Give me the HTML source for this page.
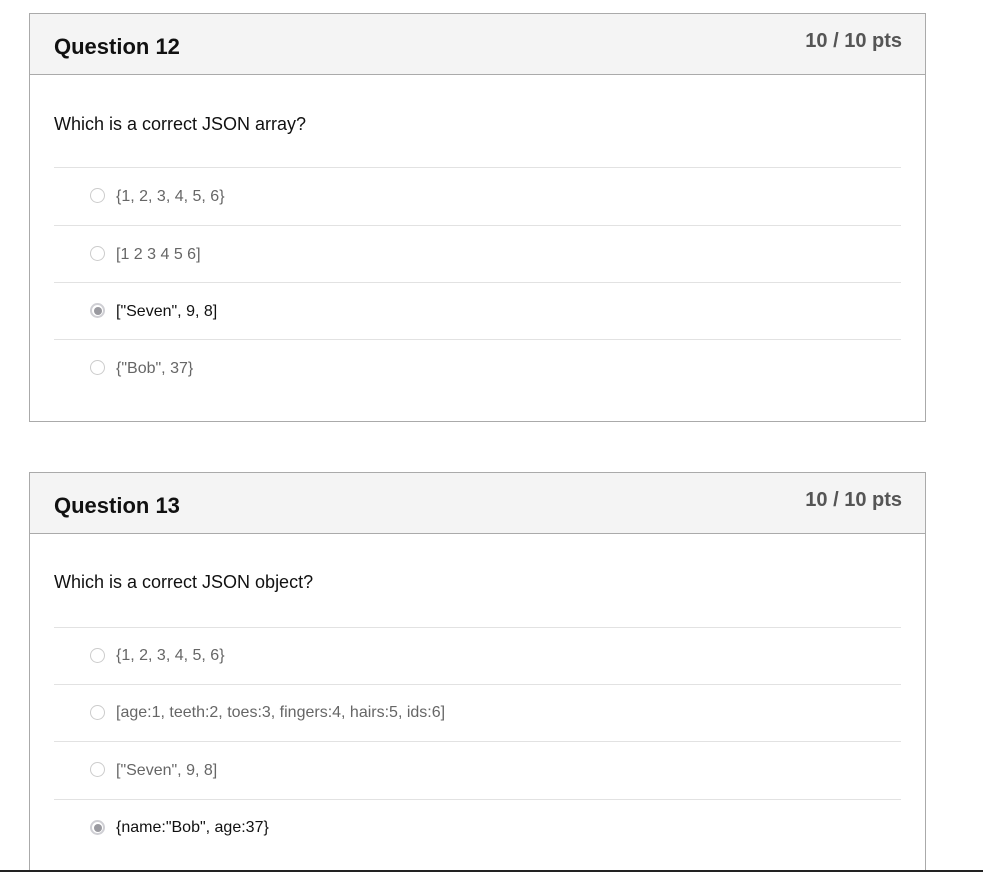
<!DOCTYPE html>
<html><head><style>
html,body{margin:0;width:983px;height:872px;overflow:hidden}
body{background:#fff;font-family:"Liberation Sans",sans-serif;position:relative}
.box{position:absolute;left:29px;width:895px;border:1px solid #aaa;background:#fff}
.hd{height:60px;background:#f4f4f4;border-bottom:1px solid #aaa;position:relative}
.hd .t{position:absolute;left:24px;top:20px;font-weight:bold;font-size:22px;color:#111}
.hd .p{position:absolute;right:23px;top:16px;font-weight:bold;font-size:20px;color:#555}
.q{position:absolute;left:24px;font-size:18px;color:#111}
.sep{position:absolute;left:24px;width:847px;height:1px;background:#e2e2e2}
.opt{position:absolute;left:86px;font-size:16px;color:#666;white-space:nowrap}
.opt.sel{color:#111}
.r{position:absolute;left:60px;width:15px;height:15px;border:1px solid #ccc;border-radius:50%;box-sizing:border-box}
.r.sel{border:2px solid #cfcfd4}
.r.sel::after{content:"";position:absolute;left:1.5px;top:1.5px;width:8px;height:8px;border-radius:50%;background:#9a9aa0}
</style></head><body>
<div class="box" style="top:13px;height:407px">
 <div class="hd"><span class="t">Question 12</span><span class="p">10 / 10 pts</span></div>
 <div class="q" style="top:100px">Which is a correct JSON array?</div>
 <div class="sep" style="top:153px"></div>
 <div class="r" style="top:174px"></div><div class="opt" style="top:174px">{1, 2, 3, 4, 5, 6}</div>
 <div class="sep" style="top:211px"></div>
 <div class="r" style="top:232px"></div><div class="opt" style="top:232px">[1 2 3 4 5 6]</div>
 <div class="sep" style="top:268px"></div>
 <div class="r sel" style="top:289px"></div><div class="opt sel" style="top:289px">["Seven", 9, 8]</div>
 <div class="sep" style="top:325px"></div>
 <div class="r" style="top:346px"></div><div class="opt" style="top:346px">{"Bob", 37}</div>
</div>
<div class="box" style="top:472px;height:420px">
 <div class="hd"><span class="t">Question 13</span><span class="p">10 / 10 pts</span></div>
 <div class="q" style="top:99px">Which is a correct JSON object?</div>
 <div class="sep" style="top:154px"></div>
 <div class="r" style="top:175px"></div><div class="opt" style="top:174px">{1, 2, 3, 4, 5, 6}</div>
 <div class="sep" style="top:211px"></div>
 <div class="r" style="top:232px"></div><div class="opt" style="top:231px">[age:1, teeth:2, toes:3, fingers:4, hairs:5, ids:6]</div>
 <div class="sep" style="top:268px"></div>
 <div class="r" style="top:289px"></div><div class="opt" style="top:289px">["Seven", 9, 8]</div>
 <div class="sep" style="top:326px"></div>
 <div class="r sel" style="top:347px"></div><div class="opt sel" style="top:346px">{name:"Bob", age:37}</div>
</div>
<div style="position:absolute;left:0;top:870px;width:983px;height:2px;background:#222"></div>
</body></html>
